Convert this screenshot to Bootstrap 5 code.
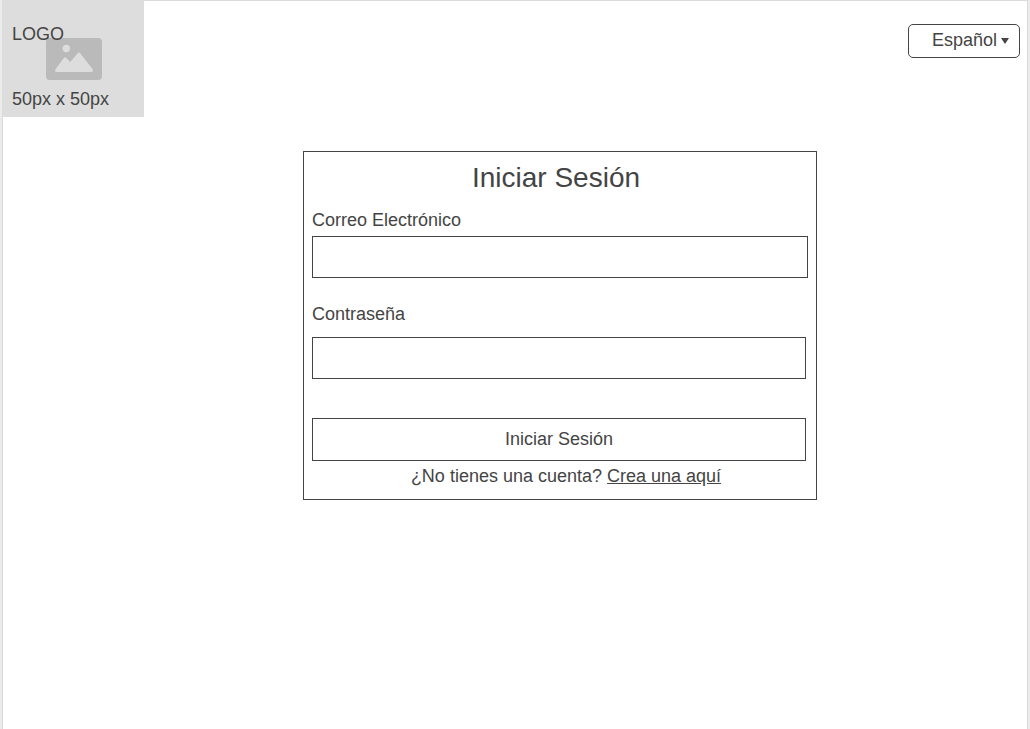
<!DOCTYPE html>
<html lang="es">
<head>
<meta charset="utf-8">
<meta name="viewport" content="width=device-width, initial-scale=1">
<title>Iniciar Sesión</title>
<link href="https://cdn.jsdelivr.net/npm/bootstrap@5.3.0/dist/css/bootstrap.min.css" rel="stylesheet">
<style>
  body { background: #ebebeb; color: #444; font-family: "Liberation Sans", Arial, sans-serif; font-size: 18px; line-height: 24px; }
  .sheet { margin: 0 2px; background: #fff; border: 1px solid #dadada; border-bottom: 0; }
  .logo-box { width: 142px; height: 117px; margin: -1px 0 0 -1px; padding: 22px 10px 6px; background: #ddd; }
  .logo-icon { top: 38px; left: 44px; }
  .logo-box span { z-index: 1; }
  .lang { margin: 23px 7px 0 0; }
  .lang select { appearance: none; width: 112px; height: 34px; padding: 0 0 2px 23px; border: 1px solid #444; border-radius: 5px; background: #fff; color: #444; }
  .lang svg { top: 14px; right: 11px; pointer-events: none; }
  .login-area { padding: 34px 0 34px 90px; }
  .login-card { width: 100%; max-width: 514px; padding: 8px 8px 11px; border: 1px solid #444; border-radius: 0; color: #444; }
  .login-card h1 { margin: 0 8px 12px 0; font-size: 28px; line-height: 36px; font-weight: 400; }
  .login-card .form-control { height: 42px; border: 1px solid #444; border-radius: 0; }
  .login-card label { margin-bottom: 4px; }
  .inset-end { margin-right: 2px; }
  .login-card .pass-label { margin-bottom: 11px; }
  .btn-login { height: 43px; margin-top: 39px; padding: 0 0 2px; border: 1px solid #444; border-radius: 0; color: #444; font-size: 18px; line-height: 24px; }
  .login-card a { color: #444; }
  .signup { margin: 3px 0 0 12px; }
</style>
</head>
<body>
<div class="sheet min-vh-100">
  <header class="d-flex justify-content-between align-items-start">
    <div class="logo-box position-relative d-flex flex-column justify-content-between">
      <svg class="logo-icon position-absolute" width="56" height="42" viewBox="0 0 56 42" aria-hidden="true">
        <rect width="56" height="42" rx="4" fill="#bababa"/>
        <circle cx="20.300" cy="10.500" r="3.700" fill="#ddd"/>
        <path d="M9.500 31.200 17.600 20.200Q19 18.300 20.400 19.900L24.200 24 31.400 15.400Q32.900 13.800 34.300 15.400L46.600 31.100Q47.800 33.900 45.300 34H11Q8 33.800 9.500 31.200Z" fill="#ddd"/>
      </svg>
      <span class="position-relative">LOGO</span>
      <span class="position-relative">50px x 50px</span>
    </div>
    <div class="lang position-relative">
      <select aria-label="Idioma">
        <option>Español</option>
      </select>
      <svg class="position-absolute" width="8" height="6" viewBox="0 0 8 6" aria-hidden="true"><path d="M0 0H8L4 6Z" fill="#444"/></svg>
    </div>
  </header>
  <main class="login-area d-flex justify-content-center">
    <form class="card login-card">
      <h1 class="text-center">Iniciar Sesión</h1>
      <label for="correo">Correo Electrónico</label>
      <input class="form-control mb-4" id="correo" type="email">
      <label class="pass-label" for="clave">Contraseña</label>
      <div class="inset-end">
        <input class="form-control" id="clave" type="password">
        <button class="btn btn-login w-100" type="submit">Iniciar Sesión</button>
      </div>
      <p class="signup text-center">¿No tienes una cuenta? <a href="#">Crea una aquí</a></p>
    </form>
  </main>
</div>
<script src="https://cdn.jsdelivr.net/npm/bootstrap@5.3.0/dist/js/bootstrap.bundle.min.js"></script>
</body>
</html>
